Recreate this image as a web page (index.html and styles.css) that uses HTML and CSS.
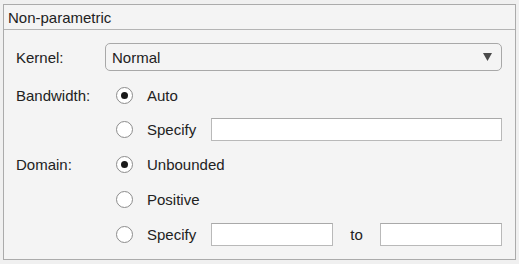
FILE: index.html
```html
<!DOCTYPE html>
<html lang="en">
<head>
  <meta charset="UTF-8">
  <title>Non-parametric</title>
  <link rel="stylesheet" href="styles.css">
</head>
<body>
  <!-- Non-parametric options panel -->
  <section class="panel">
    <div class="panel-title">Non-parametric</div>
    <div class="panel-body">
      <div class="label">Kernel:</div>
      <div class="dropdown">
        <span>Normal</span>
        <svg class="arrow" width="9" height="8" viewBox="0 0 9 8"><polygon points="0,0 9,0 4.5,8" fill="#4a4a4a"/></svg>
      </div>

      <div class="label">Bandwidth:</div>
      <div class="option">
        <span class="radio checked"></span><span class="option-text">Auto</span>
      </div>

      <div></div>
      <div class="option">
        <span class="radio"></span><span class="option-text">Specify</span>
        <input class="field" type="text">
      </div>

      <div class="label">Domain:</div>
      <div class="option">
        <span class="radio checked"></span><span class="option-text">Unbounded</span>
      </div>

      <div></div>
      <div class="option">
        <span class="radio"></span><span class="option-text">Positive</span>
      </div>

      <div></div>
      <div class="option">
        <span class="radio"></span><span class="option-text">Specify</span>
        <input class="field" type="text">
        <span class="to">to</span>
        <input class="field" type="text">
      </div>
    </div>
  </section>
</body>
</html>
```

FILE: styles.css
```css
* {
  margin: 0;
  padding: 0;
  box-sizing: border-box;
}

body {
  font-family: "Liberation Sans", Arial, sans-serif;
  font-size: 15px;
  color: #222222;
  background: #f0f0f0;
  padding: 4px 3px 0 3px;
}

.panel {
  width: 513px;
  height: 256px;
  border: 1px solid #ababab;
  background: #f4f4f4;
}

.panel-title {
  height: 25px;
  line-height: 25px;
  padding-left: 4px;
  border-bottom: 1px solid #b4b4b4;
}

.panel-body {
  display: grid;
  grid-template-columns: 89px minmax(0, 1fr);
  grid-template-rows: 28px;
  grid-auto-rows: 23px;
  row-gap: 12px;
  padding: 13px 13px 0 12px;
}

.label {
  display: flex;
  align-items: center;
}

.dropdown {
  border: 1px solid #a8a8a8;
  border-radius: 5px;
  display: flex;
  align-items: center;
  justify-content: space-between;
  padding: 0 9px 0 6px;
}

.dropdown + .label,
.dropdown + .label + .option {
  margin-top: 1px;
}

.option {
  display: flex;
  align-items: center;
  padding-left: 11px;
  min-width: 0;
}

.radio {
  width: 17px;
  height: 17px;
  border: 1px solid #8c8c8c;
  border-radius: 50%;
  background: #ffffff;
  display: flex;
  align-items: center;
  justify-content: center;
  flex: none;
}

.radio.checked::after {
  content: "";
  width: 7px;
  height: 7px;
  border-radius: 50%;
  background: #1a1a1a;
}

.option-text {
  margin-left: 14px;
  width: 64px;
  flex: none;
}

.field {
  flex: 1;
  width: 0;
  min-width: 0;
  height: 23px;
  border: 1px solid #b9b9b9;
  border-top-color: #a9a9a9;
  background: #ffffff;
  font: inherit;
}

.to {
  width: 47px;
  flex: none;
  text-align: center;
}
```
